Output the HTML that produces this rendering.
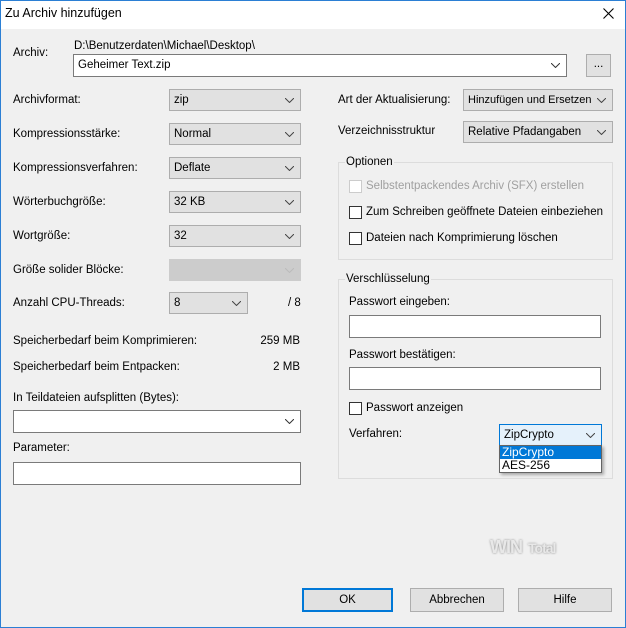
<!DOCTYPE html>
<html><head><meta charset="utf-8"><style>
*{box-sizing:border-box;margin:0;padding:0}
body{width:626px;height:628px;overflow:hidden;background:#fff;font-family:"Liberation Sans",sans-serif;font-size:11.5px;color:#000}
.win{position:absolute;left:0;top:0;width:626px;height:628px;background:#f0f0f0}
.bd{position:absolute;left:0;top:0;width:626px;height:628px;border:1px solid #2b7fd4;z-index:10}
.tb{position:absolute;left:0;top:0;width:626px;height:29px;background:#fff}
.a{position:absolute;white-space:nowrap;line-height:14px}
.cb{position:absolute;height:22px;background:#e1e1e1;border:1px solid #adadad;padding-left:4px;line-height:20px}
.cb svg,.ed svg{position:absolute;right:6px;top:8px}
.ed{position:absolute;height:23px;background:#fff;border:1px solid #7a7a7a;padding-left:4px;line-height:21px}
.grp{position:absolute;border:1px solid #dcdcdc}
.grp span{position:absolute;top:-8px;left:6px;background:#f0f0f0;padding:0 1px;line-height:14px}
.ck{position:absolute;width:13px;height:13px;border:1px solid #333;background:#fff}
.btn{position:absolute;height:24px;background:#e1e1e1;border:1px solid #adadad;text-align:center;line-height:22px}
</style></head><body><div class="win">
<div class="tb"></div>
<div class="a" style="left:5px;top:6px;font-size:12.5px">Zu Archiv hinzufügen</div>
<svg style="position:absolute;left:603px;top:8px" width="11" height="11"><path d="M0.5 0.5L10.5 10.5M10.5 0.5L0.5 10.5" stroke="#000" stroke-width="1.1"/></svg>

<div class="a" style="left:13px;top:46px">Archiv:</div>
<div class="a" style="left:74px;top:39px">D:\Benutzerdaten\Michael\Desktop\</div>
<div class="ed" style="left:73px;top:54px;width:494px">Geheimer Text.zip<svg width="9" height="5"><path d="M0 0L4.5 4.5L9 0" fill="none" stroke="#333"/></svg></div>
<div class="btn" style="left:586px;top:54px;width:25px;height:23px;line-height:18px">...</div>

<div class="a" style="left:13px;top:93px">Archivformat:</div>
<div class="a" style="left:13px;top:127px">Kompressionsstärke:</div>
<div class="a" style="left:13px;top:161px">Kompressionsverfahren:</div>
<div class="a" style="left:13px;top:195px">Wörterbuchgröße:</div>
<div class="a" style="left:13px;top:229px">Wortgröße:</div>
<div class="a" style="left:13px;top:263px">Größe solider Blöcke:</div>
<div class="a" style="left:13px;top:296px">Anzahl CPU-Threads:</div>

<div class="cb" style="left:169px;top:89px;width:132px">zip<svg width="9" height="5"><path d="M0 0L4.5 4.5L9 0" fill="none" stroke="#444"/></svg></div>
<div class="cb" style="left:169px;top:123px;width:132px">Normal<svg width="9" height="5"><path d="M0 0L4.5 4.5L9 0" fill="none" stroke="#444"/></svg></div>
<div class="cb" style="left:169px;top:157px;width:132px">Deflate<svg width="9" height="5"><path d="M0 0L4.5 4.5L9 0" fill="none" stroke="#444"/></svg></div>
<div class="cb" style="left:169px;top:191px;width:132px">32 KB<svg width="9" height="5"><path d="M0 0L4.5 4.5L9 0" fill="none" stroke="#444"/></svg></div>
<div class="cb" style="left:169px;top:225px;width:132px">32<svg width="9" height="5"><path d="M0 0L4.5 4.5L9 0" fill="none" stroke="#444"/></svg></div>
<div class="cb" style="left:169px;top:259px;width:132px;background:#ccc;border-color:#ccc"><svg width="9" height="5"><path d="M0 0L4.5 4.5L9 0" fill="none" stroke="#bbb"/></svg></div>
<div class="cb" style="left:169px;top:292px;width:79px">8<svg width="9" height="5"><path d="M0 0L4.5 4.5L9 0" fill="none" stroke="#444"/></svg></div>
<div class="a" style="left:288px;top:296px">/ 8</div>

<div class="a" style="left:13px;top:334px">Speicherbedarf beim Komprimieren:</div>
<div class="a" style="left:200px;top:334px;width:100px;text-align:right">259 MB</div>
<div class="a" style="left:13px;top:360px">Speicherbedarf beim Entpacken:</div>
<div class="a" style="left:200px;top:360px;width:100px;text-align:right">2 MB</div>
<div class="a" style="left:13px;top:391px">In Teildateien aufsplitten (Bytes):</div>
<div class="ed" style="left:13px;top:410px;width:288px"><svg width="9" height="5"><path d="M0 0L4.5 4.5L9 0" fill="none" stroke="#333"/></svg></div>
<div class="a" style="left:13px;top:441px">Parameter:</div>
<div class="ed" style="left:13px;top:462px;width:288px"></div>

<div class="a" style="left:338px;top:93px">Art der Aktualisierung:</div>
<div class="cb" style="left:463px;top:89px;width:150px;font-size:11px">Hinzufügen und Ersetzen<svg width="9" height="5"><path d="M0 0L4.5 4.5L9 0" fill="none" stroke="#444"/></svg></div>
<div class="a" style="left:338px;top:124px">Verzeichnisstruktur</div>
<div class="cb" style="left:463px;top:121px;width:150px">Relative Pfadangaben<svg width="9" height="5"><path d="M0 0L4.5 4.5L9 0" fill="none" stroke="#444"/></svg></div>

<div class="grp" style="left:338px;top:162px;width:275px;height:98px"><span>Optionen</span></div>
<div class="ck" style="left:349px;top:180px;border-color:#ccc"></div>
<div class="a" style="left:366px;top:179px;color:#a0a0a0">Selbstentpackendes Archiv (SFX) erstellen</div>
<div class="ck" style="left:349px;top:206px"></div>
<div class="a" style="left:366px;top:205px">Zum Schreiben geöffnete Dateien einbeziehen</div>
<div class="ck" style="left:349px;top:232px"></div>
<div class="a" style="left:366px;top:231px">Dateien nach Komprimierung löschen</div>

<div class="grp" style="left:338px;top:279px;width:275px;height:200px"><span>Verschlüsselung</span></div>
<div class="a" style="left:349px;top:295px">Passwort eingeben:</div>
<div class="ed" style="left:349px;top:315px;width:252px"></div>
<div class="a" style="left:349px;top:348px">Passwort bestätigen:</div>
<div class="ed" style="left:349px;top:367px;width:252px"></div>
<div class="ck" style="left:349px;top:402px"></div>
<div class="a" style="left:366px;top:401px">Passwort anzeigen</div>
<div class="a" style="left:349px;top:427px">Verfahren:</div>
<div class="cb" style="left:499px;top:424px;width:103px;background:#e5f1fb;border-color:#0078d7">ZipCrypto<svg width="9" height="5"><path d="M0 0L4.5 4.5L9 0" fill="none" stroke="#444"/></svg></div>
<div style="position:absolute;left:499px;top:445px;width:103px;height:28px;background:#fff;border:1px solid #646464;box-shadow:2px 2px 3px rgba(0,0,0,.3)">
<div style="height:13px;background:#0078d7;color:#fff;padding-left:2px;line-height:13px;font-size:12px">ZipCrypto</div>
<div style="height:13px;padding-left:2px;line-height:13px;font-size:12px">AES-256</div></div>

<div class="a" style="left:490px;top:540px;font-weight:bold;font-size:18px;color:#e8e8e8;text-shadow:0 0 2px #888;letter-spacing:-1px">WIN<span style="font-size:14px;margin-left:6px">Total</span></div>

<div class="btn" style="left:302px;top:588px;width:91px;border:2px solid #0078d7;line-height:20px">OK</div>
<div class="btn" style="left:410px;top:588px;width:94px">Abbrechen</div>
<div class="btn" style="left:518px;top:588px;width:94px">Hilfe</div>
</div><div class="bd"></div></body></html>
